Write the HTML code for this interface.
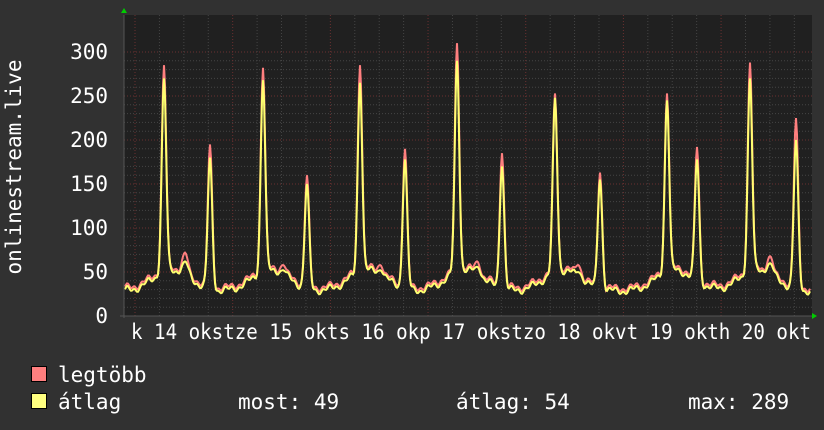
<!DOCTYPE html>
<html><head><meta charset="utf-8"><style>
html,body{margin:0;padding:0;background:#313131;width:824px;height:430px;overflow:hidden}
svg{display:block}
text{font-family:"DejaVu Sans Mono","Liberation Mono",monospace;fill:#fff}
</style></head><body>
<svg id="s" width="824" height="430" xmlns="http://www.w3.org/2000/svg">
<rect x="124" y="15" width="688" height="301" fill="#202020"/>
<g id="grid"></g>
<path id="pmax" fill="none" stroke="#ff7f7f" stroke-width="2"/>
<path id="pavg" fill="none" stroke="#ffff70" stroke-width="2"/>
<line x1="124" y1="15" x2="124" y2="318" stroke="#555"/>
<line x1="120" y1="316" x2="812" y2="316" stroke="#555"/>
<polygon points="121,13 127,13 124,8" fill="#0c0"/>
<polygon points="812,313 812,319 817,316" fill="#0c0"/>
<g font-size="21" text-anchor="end">
<text x="108" y="59">300</text><text x="108" y="103">250</text><text x="108" y="147">200</text>
<text x="108" y="191">150</text><text x="108" y="235">100</text><text x="108" y="279">50</text>
<text x="108" y="323">0</text></g>
<text font-size="21" transform="translate(21,167) rotate(-90)" text-anchor="middle">onlinestream.live</text>
<text x="131" y="339" font-size="21" textLength="680" lengthAdjust="spacingAndGlyphs">k 14 okstze 15 okts 16 okp 17 okstzo 18 okvt 19 okth 20 okt</text>
<rect x="31.5" y="366.5" width="15" height="15" fill="#ff7f7f" stroke="#000"/>
<rect x="31.5" y="393.5" width="15" height="15" fill="#ffff7f" stroke="#000"/>
<g font-size="21">
<text x="58" y="382">legtöbb</text><text x="58" y="409">átlag</text>
<text x="238" y="409">most: 49</text><text x="456" y="409">átlag: 54</text><text x="688" y="409">max: 289</text></g>
</svg>
<script>
var g=document.getElementById('grid'),h='';
for(var i=0;i<=30;i++){var y=316-i*8.8;if(y<15)break;var maj=i%5==0;
h+='<line x1="124" x2="812" y1="'+y+'" y2="'+y+'" stroke="'+(maj?'#6a3030':'#444')+'" stroke-dasharray="1,2"/>';}
for(var x=135;x<812;x+=24.42){var k=Math.round((x-135)/24.42);var maj=k%4==0;
h+='<line y1="15" y2="316" x1="'+x+'" x2="'+x+'" stroke="'+(maj?'#6a3030':'#444')+'" stroke-dasharray="1,2"/>';}
g.innerHTML=h;
var P=[[164,285,270],[185,72,62],[210,195,180],[263,282,268],[283,58,52],[307,160,150],[360,285,265],[380,58,52],[405,190,178],[457,310,290],[477,62,56],[502,185,170],[555,253,248],[578,58,50],[600,163,155],[667,253,245],[697,192,178],[750,288,270],[770,68,60],[796,225,200]];
var big=[164,263,360,457,555,667,750];
function r(x){return Math.sin(x*0.9)*2+Math.sin(x*0.31)*3;}
var dm='',da='';
for(var x=125;x<=810;x++){
 var b=28;
 for(var j=0;j<big.length;j++){var d=x-big[j];b+=24*Math.exp(-Math.pow((d-8)/26,2));}
 b+=r(x);
 var m=b+3,a=b;
 for(var j=0;j<P.length;j++){var d=x-P[j][0];var s=P[j][1]<100?3:2.2;var e=Math.exp(-d*d/(2*s*s));m=Math.max(m,b+(P[j][1]-b)*e);a=Math.max(a,b+(P[j][2]-b)*e);}
 m=Math.max(m,a);
 dm+=(x==125?'M':'L')+x+','+(316-m*0.88).toFixed(1);
 da+=(x==125?'M':'L')+x+','+(316-a*0.88).toFixed(1);
}
document.getElementById('pmax').setAttribute('d',dm);
document.getElementById('pavg').setAttribute('d',da);
</script>
</body></html>
